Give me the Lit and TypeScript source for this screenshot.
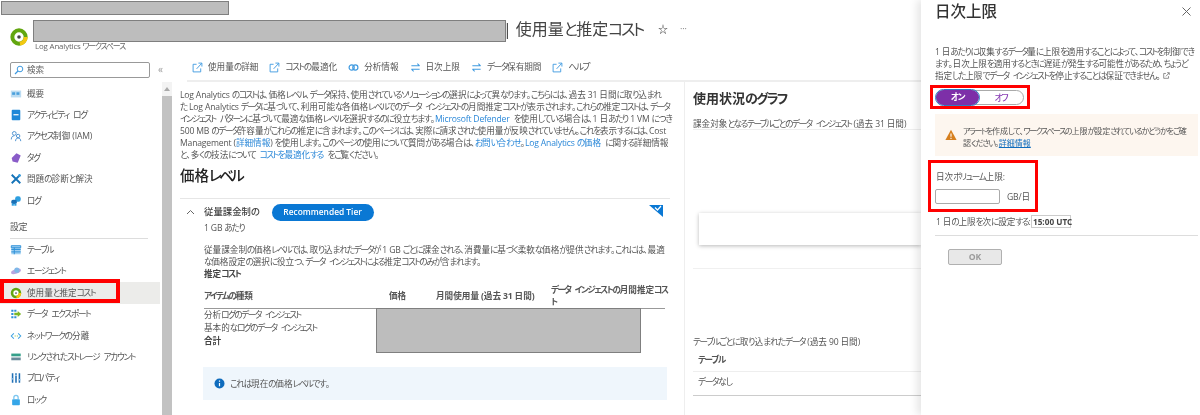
import { LitElement, html, css, svg } from "lit";
import { customElement } from "lit/decorators.js";

const ext = html`<svg class="ti" viewBox="0 0 12 12"><path d="M5 2.5H1.2v8.3h8.3V7" fill="none" stroke="#3f9ae0" stroke-width="1"/><path d="M5 7.5 10.5 1.5M7 1.2h3.8V5" fill="none" stroke="#3f9ae0" stroke-width="1"/></svg>`;
const swap = html`<svg class="ti" viewBox="0 0 12 12"><path d="M1.5 4.2h9M8 1.8l2.5 2.4M10.5 7.8h-9M4 10.2 1.5 7.8" fill="none" stroke="#3f9ae0" stroke-width="1.1"/></svg>`;
const links = html`<svg class="ti" viewBox="0 0 12 12"><circle cx="4" cy="6" r="2.8" fill="none" stroke="#3f9ae0" stroke-width="1.3"/><circle cx="8" cy="6" r="2.8" fill="none" stroke="#3f9ae0" stroke-width="1.3"/></svg>`;

const logo = (s: number) => html`<svg width=${s} height=${s} viewBox="0 0 20 20"><circle cx="10" cy="10" r="7.4" fill="#fff" stroke="#62a60f" stroke-width="4.4"/><path d="M17.4 10A7.4 7.4 0 0 1 11 17.4" fill="none" stroke="#f2c811" stroke-width="4.4"/><circle cx="10" cy="10" r="2" fill="#444"/></svg>`;

const navIcons: Record<string, unknown> = {
  overview: svg`<rect x="1" y="3" width="12" height="8" fill="#bcdcf2"/><rect x="2.5" y="5" width="3.5" height="3" fill="#4aa0dc"/><rect x="7.5" y="5" width="3.5" height="3" fill="#4aa0dc"/>`,
  activity: svg`<rect x="2" y="1" width="10" height="12" rx="1" fill="#1e88d8"/><rect x="4" y="6" width="6" height="1.4" fill="#fff"/>`,
  iam: svg`<circle cx="5" cy="4" r="2.2" fill="none" stroke="#4a90d0" stroke-width="1.1"/><path d="M1.5 11c0-3 1.5-4.2 3.5-4.2" fill="none" stroke="#4a90d0" stroke-width="1.1"/><circle cx="9.5" cy="7" r="2" fill="none" stroke="#4a90d0" stroke-width="1.1"/><path d="M6.5 13c0-2.5 1.2-3.6 3-3.6s3 1.1 3 3.6" fill="none" stroke="#4a90d0" stroke-width="1.1"/>`,
  tag: svg`<path d="M7.5 1.5 12.5 4 9 12.5 3 11 2 7z" fill="#8a5cc8"/>`,
  tools: svg`<path d="M2 2l10 10M12 2 2 12" stroke="#1573b8" stroke-width="2.2"/><circle cx="11" cy="3" r="1.6" fill="#3aa0e0"/>`,
  log: svg`<rect x="6" y="1.5" width="6.5" height="6.5" rx="2.5" fill="#2e9fe0"/><rect x="1.5" y="5.5" width="6.5" height="5" rx="2" fill="#1a6fb5"/><rect x="2" y="10" width="2.5" height="2.5" fill="#2e9fe0"/><rect x="5" y="10" width="2.5" height="2.5" fill="#2e9fe0"/>`,
  table: svg`<rect x="1.5" y="2" width="11" height="10" fill="#9fd0f2"/><path d="M1.5 2h11v2.4h-11zM1.5 6.4h11M1.5 9.2h11M5 4v8" fill="none" stroke="#2e8fd8" stroke-width="1.1"/>`,
  agent: svg`<ellipse cx="7" cy="7.5" rx="6" ry="2.6" fill="#b9a4e0" transform="rotate(-20 7 7.5)"/><circle cx="8" cy="6" r="3" fill="#7fb8e8"/>`,
  cost: svg`<circle cx="7" cy="7" r="4.6" fill="#fff" stroke="#62a60f" stroke-width="3"/><path d="M11.6 7A4.6 4.6 0 0 1 7.5 11.6" fill="none" stroke="#f2c811" stroke-width="3"/><circle cx="7" cy="7" r="1" fill="#444"/>`,
  export: svg`<path d="M1.5 2h2.5v2.5H1.5zM1.5 5.8h2.5v2.5H1.5zM1.5 9.6h2.5v2.5H1.5zM5 2h2.5v2.5H5zM5 9.6h2.5v2.5H5z" fill="#2e8fd8"/><path d="M5 5.5h4V3.5l4 3.5-4 3.5V8.5H5z" fill="#7ab827"/>`,
  net: svg`<path d="M4.5 4 1.5 7l3 3M9.5 4l3 3-3 3" fill="none" stroke="#3aa0e0" stroke-width="1.2"/><path d="M5.5 7h1M8 7h1" stroke="#7ab827" stroke-width="1.2"/>`,
  storage: svg`<rect x="1.5" y="3" width="11" height="3.2" fill="#35a08a"/><rect x="1.5" y="7.6" width="11" height="3.2" fill="#6a8a9a"/>`,
  props: svg`<path d="M3 1.5v11M7 1.5v11M11 1.5v11" stroke="#1f6fb5" stroke-width="1.8"/><path d="M1.8 8h2.4M5.8 4h2.4M9.8 9h2.4" stroke="#9cc8ec" stroke-width="1.6"/>`,
  lock: svg`<rect x="2.5" y="6" width="9" height="7" rx="1" fill="#35a6e8"/><path d="M4.5 6V4a2.5 2.5 0 0 1 5 0v2" fill="none" stroke="#7cc6f0" stroke-width="1.5"/>`,
};
const navIcon = (k: string) => html`<svg class="ni" viewBox="0 0 14 14">${navIcons[k]}</svg>`;

/* The reference's Japanese face has much narrower kana than its kanji, and wider word spaces: each run gets its own tracking. */
const runs = (s: string) =>
  s.split(/([\u30A0-\u30FF]+|[\u3040-\u309F]+|[A-Za-z0-9 .:()/-]+)/).filter(Boolean).map((p) => {
    const c = p.charCodeAt(0);
    if (p === " ") return html`<span class="sp"> </span>`;
    if (c >= 0x30a0 && c <= 0x30ff) return html`<span class="k">${p}</span>`;
    if (c >= 0x3040 && c <= 0x309f) return html`<span class="h">${p}</span>`;
    if (c < 0x80) return html`<span class="l">${p}</span>`;
    return p;
  });
/* [[x]] is a link, \n a line break. */
const rich = (s: string) =>
  s.split("\n").map((line, i) => html`${i ? html`<br>` : ""}${line.split(/(\[\[.*?\]\])/).filter(Boolean).map((seg) =>
    seg.startsWith("[[") ? html`<a>${runs(seg.slice(2, -2))}</a>` : runs(seg))}`);

const group1: [string, string][] = [
  ["overview", "概要"], ["activity", "アクティビティ ログ"], ["iam", "アクセス制御 (IAM)"],
  ["tag", "タグ"], ["tools", "問題の診断と解決"], ["log", "ログ"],
];
const group2: [string, string][] = [
  ["table", "テーブル"], ["agent", "エージェント"], ["cost", "使用量と推定コスト"], ["export", "データ エクスポート"],
  ["net", "ネットワークの分離"], ["storage", "リンクされたストレージ アカウント"], ["props", "プロパティ"], ["lock", "ロック"],
];
const tools: [unknown, string][] = [
  [ext, "使用量の詳細"], [ext, "コストの最適化"], [links, "分析情報"], [swap, "日次上限"], [swap, "データ保有期間"], [ext, "ヘルプ"],
];
const intro = "Log Analytics のコストは、価格レベル、データ保持、使用されているソリューションの選択によって異なります。こちらには、過去 31 日間に取り込まれ\nた Log Analytics データに基づいて、利用可能な各価格レベルでのデータ インジェストの月間推定コストが表示されます。これらの推定コストは、データ\nインジェスト パターンに基づいて最適な価格レベルを選択するのに役立ちます。[[Microsoft Defender]] を使用している場合は、1 日あたり 1 VM につき\n500 MB のデータ許容量がこれらの推定に含まれます。このページには、実際に請求された使用量が反映されていません。これを表示するには、Cost\nManagement ([[詳細情報]]) を使用します。このページの使用について質問がある場合は、[[お問い合わせ]]。[[Log Analytics の価格]] に関する詳細情報\nと、多くの技法について [[コストを最適化する]] をご覧ください。";

@customElement("app-root")
export class AppRoot extends LitElement {
  static styles = css`
    :host { display: block; width: 1200px; height: 415px; }
    * { box-sizing: border-box; }
    .root {
      position: relative; width: 1200px; height: 415px; overflow: hidden; background: #fff;
      display: grid; grid-template-columns: 921px 279px;
      font-family: "Open Sans", "Noto Sans CJK JP", sans-serif; font-size: 8.6px; color: #555;
      font-feature-settings: "palt"; line-height: 12px; filter: blur(0.35px);
    }
    .k { letter-spacing: -0.15em; }
    .h { letter-spacing: -0.11em; }
    .l { letter-spacing: -0.02em; }
    .sp { letter-spacing: 2px; }
    .main .k, .ptext .k, .warn .k, .limit .k, .csub .k { letter-spacing: -0.18em; }
    .main .h, .ptext .h, .warn .h, .limit .h, .csub .h { letter-spacing: -0.14em; }
    .left { display: flex; flex-direction: column; min-width: 0; height: 415px; }
    .top { height: 16px; flex: none; }
    .header { height: 40px; flex: none; display: flex; padding-left: 10px; position: relative; }
    .logo { margin-top: 12px; width: 18px; }
    .htext { margin-left: 7px; padding-top: 2px; width: 600px; }
    .title { margin-left: 468px; font-size: 16px; line-height: 22px; height: 22px; color: #444; display: flex; align-items: center; white-space: nowrap; gap: 4px; }
    .star { margin-left: 11px; font-size: 10px; }
    .dots { margin-left: 8px; font-size: 9px; color: #777; }
    .sub { line-height: 11px; color: #666; font-size: 7.9px; margin-top: 1px; }
    .body { flex: 1; display: grid; grid-template-columns: 162px 1fr; min-height: 0; }
    .side { padding-top: 6px; position: relative; }
    .search { margin-left: 10px; width: 140px; height: 16px; border: 1px solid #999; border-radius: 2px; display: flex; align-items: center; padding-left: 3px; gap: 3px; color: #666; }
    .collapse { position: absolute; left: 158px; top: 7px; color: #999; font-size: 10px; }
    .nav { margin-top: 5px; }
    .row { height: 21.4px; margin-right: 2px; display: flex; align-items: center; padding-left: 10px; white-space: nowrap; gap: 5px; }
    .row.sel { background: #ececea; }
    .ni { width: 12px; height: 12px; flex: none; }
    .sec { height: 28px; margin: 0 14px 0 10px; border-bottom: 1px solid #ddd; padding-top: 10px; font-size: 8.8px; }
    .right { display: flex; flex-direction: column; min-width: 0; min-height: 0; }
    .toolbar { height: 26px; flex: none; margin-left: 25px; border-bottom: 2px solid #eee; display: flex; align-items: center; padding-left: 5px; white-space: nowrap; padding-bottom: 2px; }
    .tool { display: flex; align-items: center; gap: 5px; margin-right: 11px; }
    .ti { width: 11px; height: 11px; flex: none; }
    .content { flex: 1; display: grid; grid-template-columns: 10px 513px 1fr; min-height: 0; }
    .sb { background: #f3f3f3; display: flex; flex-direction: column; }
    .arrow { height: 14px; display: flex; align-items: center; justify-content: center; }
    .thumb { flex: 1; background: #c2c2c2; }
    .main { padding: 7px 14px 0 8px; border-right: 1px solid #eee; white-space: nowrap; min-width: 0; }
    a { color: #2b88d8; text-decoration: none; }
    h2 { margin: 5px 0 0; font-size: 14.5px; line-height: 20px; font-weight: 500; color: #222; height: 33px; border-bottom: 1px solid #e6e6e6; }
    .tier { padding: 4px 5px 0 24px; position: relative; }
    .tierhead { display: flex; align-items: center; height: 18px; gap: 13px; font-size: 9.4px; font-weight: 500; color: #444; }
    .chev { position: absolute; left: 6px; top: 10px; }
    .pill { background: #0a78d4; color: #fff; width: 102px; height: 17px; border-radius: 9px; display: flex; align-items: center; justify-content: center; font-weight: 600; font-size: 8.4px; font-family: "Open Sans", sans-serif; }
    .corner { position: absolute; right: 7px; top: 6px; }
    .per { margin-top: -1px; height: 16px; line-height: 16px; }
    .desc { margin-top: 8px; }
    .bold { font-weight: 700; color: #444; }
    .thead { display: grid; grid-template-columns: 185px 47px 115px 1fr; margin-top: 4px; height: 25px; align-items: center; border-bottom: 1px solid #999; font-weight: 700; color: #555; line-height: 12px; }
    .tb { line-height: 13px; }
    .info { margin: 19px 0 0 -1px; width: 464px; height: 33px; background: #eff6fc; display: flex; align-items: center; padding-left: 11px; gap: 5px; }
    .chart { padding: 8px 0 0 8px; white-space: nowrap; min-width: 0; overflow: hidden; }
    h3 { margin: 0; font-size: 13px; line-height: 16px; font-weight: 700; color: #333; }
    .csub { margin-top: 12px; height: 12px; border-bottom: 1px solid #eee; line-height: 12px; }
    .card { margin: 83px 0 0 6px; height: 32px; background: #fff; box-shadow: 0 1px 4px rgba(0,0,0,.28); }
    .cline { margin-top: 23px; height: 1px; background: #f0f0f0; }
    .cap2 { margin-top: 67px; height: 12px; }
    .t2h { padding-left: 5px; font-weight: 700; height: 24px; line-height: 24px; border-bottom: 1px solid #eee; }
    .t2b { padding-left: 5px; height: 24px; line-height: 21px; border-bottom: 1px solid #ccc; }
    .panel { background: #fff; box-shadow: -4px 0 8px rgba(0,0,0,.1); padding: 0 2px 0 14px; white-space: nowrap; position: relative; z-index: 1; }
    .ptitle { height: 22px; display: flex; justify-content: space-between; align-items: center; font-size: 15.5px; font-weight: 500; color: #333; padding-right: 7px; }
    .ptitle .k, .ptitle .h { letter-spacing: 0; }
    .ptext { margin-top: 24px; color: #555; }
    .toggle { margin: 8px 0 0 1px; width: 88px; height: 15px; border: 1px solid #aaa; border-radius: 8px; display: flex; align-items: center; color: #8a3fb5; font-weight: 500; }
    .on { width: 43px; height: 15px; margin-left: -1px; border-radius: 8px; background: #7d2fa8; outline: 1.5px solid #2b7cc4; color: #fff; text-align: center; line-height: 14px; font-weight: 700; }
    .off { width: 44px; text-align: center; }
    .warn { margin-top: 9px; height: 42px; background: #fdf6ef; display: flex; padding: 11px 0 0 10px; gap: 6px; color: #555; font-size: 8px; }
    .warn a { color: #0f6cbd; text-decoration: underline; }
    .wi { width: 12px; height: 12px; margin-top: 4px; flex: none; }
    .label { margin: 15px 0 0 1px; height: 12px; }
    .inrow { margin-top: 6px; display: flex; align-items: center; gap: 7px; }
    .input { width: 65px; height: 15px; border: 1px solid #aaa; border-radius: 2px; }
    .limit { margin: 11px 0 0 1px; display: flex; align-items: center; height: 13px; }
    .limit > span:first-child { width: 95px; }
    .chip { border: 1px solid #ccc; height: 13px; width: 40px; font-weight: 700; font-size: 8.2px; line-height: 11px; padding-left: 1px; color: #444; font-family: "Open Sans", sans-serif; }
    .pline { margin-top: 7px; height: 1px; background: #ddd; }
    .ok { margin: 13px 0 0 13px; width: 54px; height: 16px; background: #e8e8e8; border: 1px solid #b0b0b0; border-radius: 2px; color: #9a9a9a; text-align: center; font-weight: 700; line-height: 14px; }
    .red { position: absolute; border: 3px solid #f00; z-index: 3; }
    .r1 { left: 0; top: 279px; width: 120px; height: 24px; border-width: 4px; }
    .r2 { left: 930px; top: 85px; width: 100px; height: 24px; }
    .r3 { left: 928px; top: 160px; width: 110px; height: 52px; }
    .mask { position: absolute; background: #bdbdbd; border: 1px solid #7f7f7f; z-index: 2; }
    .m1 { left: 1px; top: 1px; width: 228px; height: 14px; }
    .m2 { left: 33px; top: 20px; width: 473px; height: 22px; }
    .m3 { left: 376px; top: 308px; width: 265px; height: 45px; }
  `;

  private nav(rows: [string, string][]) {
    return rows.map(([k, t]) => html`<div class="row ${k === "cost" ? "sel" : ""}">${navIcon(k)}<span>${rich(t)}</span></div>`);
  }

  render() {
    return html`<div class="root">
      <div class="left">
        <div class="top"></div>
        <div class="header">
          <div class="logo">${logo(18)}</div>
          <div class="htext">
            <div class="title"><span>|</span><span>${rich("使用量と推定コスト")}</span><span class="star">☆</span><span class="dots">···</span></div>
            <div class="sub">${rich("Log Analytics ワークスペース")}</div>
          </div>
        </div>
        <div class="body">
          <div class="side">
            <div class="search"><svg width="10" height="10" viewBox="0 0 10 10"><circle cx="6" cy="4" r="2.8" fill="none" stroke="#3f9ae0"/><path d="M4 6 1 9" stroke="#3f9ae0" stroke-width="1.2"/></svg><span>検索</span></div>
            <div class="collapse">«</div>
            <div class="nav">
              ${this.nav(group1)}
              <div class="sec">設定</div>
              ${this.nav(group2)}
            </div>
          </div>
          <div class="right">
            <div class="toolbar">${tools.map(([i, t]) => html`<div class="tool">${i}<span>${rich(t)}</span></div>`)}</div>
            <div class="content">
              <div class="sb">
                <div class="arrow"><svg width="6" height="4" viewBox="0 0 6 4"><path d="M3 0 6 4H0z" fill="#aaa"/></svg></div>
                <div class="thumb"></div>
              </div>
              <div class="main">
                <div>${rich(intro)}</div>
                <h2>${rich("価格レベル")}</h2>
                <div class="tier">
                  <svg class="chev" width="9" height="6" viewBox="0 0 9 6"><path d="M1 5 4.5 1.5 8 5" fill="none" stroke="#666"/></svg>
                  <svg class="corner" width="14" height="12" viewBox="0 0 14 12"><path d="M0 0h14v12z" fill="#0a78d4"/><path d="M6 2.5 8.5 5 12 1" fill="none" stroke="#fff" stroke-width="1.2"/></svg>
                  <div class="tierhead"><span>${rich("従量課金制の")}</span><span class="pill">Recommended Tier</span></div>
                  <div class="per">${rich("1 GB あたり")}</div>
                  <div class="desc">${rich("従量課金制の価格レベルでは、取り込まれたデータが 1 GB ごとに課金される、消費量に基づく柔軟な価格が提供されます。これには、最適\nな価格設定の選択に役立つ、データ インジェストによる推定コストのみが含まれます。")}<br><span class="bold">${rich("推定コスト")}</span></div>
                  <div class="thead"><span>${rich("アイテムの種類")}</span><span>${rich("価格")}</span><span>${rich("月間使用量 (過去 31 日間)")}</span><span>${rich("データ インジェストの月間推定コス\nト")}</span></div>
                  <div class="tb">${rich("分析ログのデータ インジェスト\n基本的なログのデータ インジェスト")}<br><span class="bold">${rich("合計")}</span></div>
                  <div class="info"><svg width="11" height="11" viewBox="0 0 11 11"><circle cx="5.5" cy="5.5" r="5" fill="#0f6cbd"/><path d="M5.5 5v3.2M5.5 2.6v1.2" stroke="#fff" stroke-width="1.2"/></svg><span>${rich("これは現在の価格レベルです。")}</span></div>
                </div>
              </div>
              <div class="chart">
                <h3>${rich("使用状況のグラフ")}</h3>
                <div class="csub">${rich("課金対象となるテーブルごとのデータ インジェスト (過去 31 日間)")}</div>
                <div class="card"></div>
                <div class="cline"></div>
                <div class="cap2">${rich("テーブルごとに取り込まれたデータ (過去 90 日間)")}</div>
                <div class="t2h">${rich("テーブル")}</div>
                <div class="t2b">${rich("データなし")}</div>
              </div>
            </div>
          </div>
        </div>
      </div>
      <div class="panel">
        <div class="ptitle"><span>${rich("日次上限")}</span><svg width="9" height="9" viewBox="0 0 9 9"><path d="M.5.5l8 8M8.5.5l-8 8" stroke="#666"/></svg></div>
        <div class="ptext">${rich("1 日あたりに収集するデータ量に上限を適用することによって、コストを制御でき\nます。日次上限を適用するときに遅延が発生する可能性があるため、ちょうど\n指定した上限でデータ インジェストを停止することは保証できません。")} <svg width="7" height="7" viewBox="0 0 12 12"><path d="M5 2.5H1.2v8.3h8.3V7M5 7.5 10.5 1.5M7 1.2h3.8V5" fill="none" stroke="#666" stroke-width="1.2"/></svg></div>
        <div class="toggle"><div class="on">${rich("オン")}</div><div class="off">${rich("オフ")}</div></div>
        <div class="warn"><svg class="wi" viewBox="0 0 12 12"><path d="M6 .8 11.6 11H.4z" fill="#d67f1e"/><path d="M6 4.4v3.4M6 8.8v1.1" stroke="#fff" stroke-width="1.1"/></svg><div>${rich("アラートを作成して、ワークスペースの上限が設定されているかどうかをご確\n認ください。[[詳細情報]]")}</div></div>
        <div class="label">${rich("日次ボリューム上限:")}</div>
        <div class="inrow"><div class="input"></div><span>${rich("GB/日")}</span></div>
        <div class="limit"><span>${rich("1 日の上限を次に設定する:")}</span><span class="chip">15:00 UTC</span></div>
        <div class="pline"></div>
        <div class="ok">OK</div>
      </div>
      <div class="mask m1"></div><div class="mask m2"></div><div class="mask m3"></div>
      <div class="red r1"></div><div class="red r2"></div><div class="red r3"></div>
    </div>`;
  }
}
